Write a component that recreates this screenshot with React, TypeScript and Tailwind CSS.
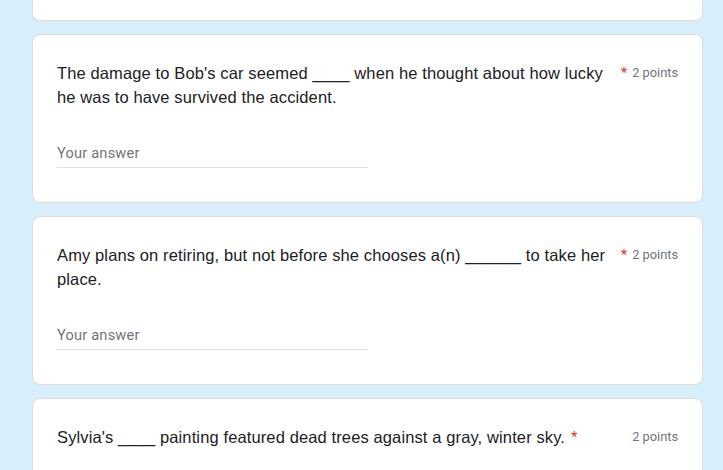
import React from "react";

const questions = [
  "The damage to Bob's car seemed ____ when he thought about how lucky he was to have survived the accident.",
  "Amy plans on retiring, but not before she chooses a(n) ______ to take her place.",
];

function Header({ text }: { text: string }) {
  return (
    <div className="flex items-start">
      <div className="min-w-0 shrink text-[16.5px] leading-[24px] text-[#202124] font-['Liberation_Sans',Arial,sans-serif] tracking-[0.12px]">
        {text}
      </div>
      <span className="shrink-0 pl-[6px] pr-[1px] text-[16.5px] leading-[24px] text-[#d93025] font-['Liberation_Sans',Arial,sans-serif]">
        *
      </span>
      <div className="ml-auto shrink-0 pl-[4px] whitespace-nowrap text-[12.8px] leading-[24px] text-[#70757a] font-['Roboto',Arial,sans-serif]">
        2 points
      </div>
    </div>
  );
}

function Card({ text }: { text: string }) {
  return (
    <div className="w-[671px] ml-[32px] bg-white border border-[#dadce0] rounded-[8px] px-[24px] pt-[26px] pb-[34px]">
      <Header text={text} />
      <div className="mt-[34px] w-1/2 border-b border-[#e0e0e0] pb-[4px] text-[14.6px] leading-[20px] text-[#70757a] font-['Roboto',Arial,sans-serif] tracking-[0.2px]">
        Your answer
      </div>
    </div>
  );
}

export default function App() {
  return (
    <div className="w-[723px] h-[470px] overflow-hidden bg-[#d9eefb]">
      <div className="flex flex-col gap-[13px]">
        <div className="w-[671px] ml-[32px] h-[21px] bg-white border-x border-b border-[#dadce0] rounded-b-[8px]" />
        {questions.map((q) => (
          <Card key={q} text={q} />
        ))}
        <div className="w-[671px] ml-[32px] h-[120px] bg-white border border-[#dadce0] rounded-[8px] px-[24px] pt-[26px]">
          <Header text="Sylvia's ____ painting featured dead trees against a gray, winter sky." />
        </div>
      </div>
    </div>
  );
}
